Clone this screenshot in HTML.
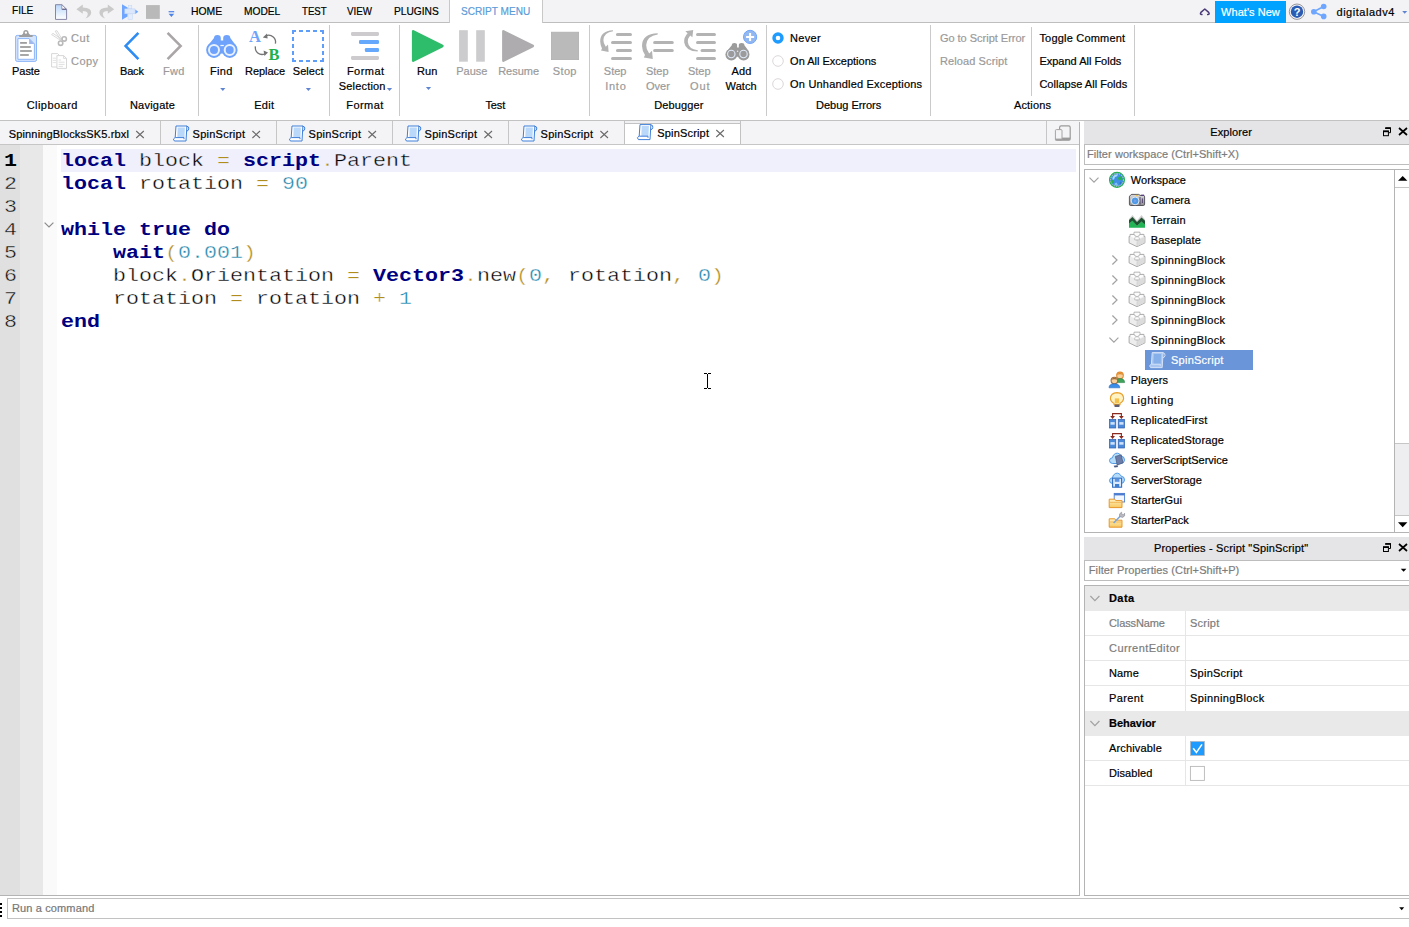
<!DOCTYPE html>
<html lang="en"><head><meta charset="utf-8"><title>SpinScript - Roblox Studio</title>
<style>

html,body{margin:0;padding:0}
body{width:1409px;height:927px;position:relative;overflow:hidden;background:#fff;font-family:"Liberation Sans",sans-serif;font-size:11px;color:#111}
.t{position:absolute;white-space:nowrap;line-height:14px;font-size:11px;-webkit-text-stroke:0.2px}
.b{position:absolute;box-sizing:border-box}
#ov{position:absolute;left:0;top:0;width:1409px;height:927px;pointer-events:none}
#ov text{font-family:"Liberation Serif",serif}
.code{position:absolute;left:61px;white-space:pre;font-family:"Liberation Mono",monospace;font-size:18.5px;line-height:23px;height:23px;transform-origin:0 0;transform:scaleX(1.1709);color:#000;-webkit-text-stroke:0.35px #fff}
.ln{position:absolute;left:4px;white-space:pre;font-family:"Liberation Mono",monospace;font-size:18.5px;line-height:23px;height:23px;transform-origin:0 0;transform:scaleX(1.1709);color:#111;-webkit-text-stroke:0.35px #e4e4e4}
.k{font-weight:bold;color:#00007f;-webkit-text-stroke:0}
.hl{-webkit-text-stroke-color:#f0f0fc}
.n{color:#1f86ad}
.o{color:#b08c1c}

</style></head>
<body>
<div class="b" style="left:0px;top:0px;width:1409px;height:22px;background:#f3f3f5;"></div>
<div class="b" style="left:0px;top:22px;width:1409px;height:1px;background:#bebebe;"></div>
<div class="b" style="left:449px;top:0px;width:94px;height:23px;background:#fff;border-left:1px solid #c8c8c8;border-right:1px solid #c8c8c8;"></div>
<div class="b" style="left:1215px;top:1px;width:71px;height:22px;background:#00a2ff;"></div>
<div class="b" style="left:0px;top:120px;width:1409px;height:1px;background:#c2c2c2;"></div>
<div class="b" style="left:105px;top:25px;width:1px;height:91px;background:#cacaca;"></div>
<div class="b" style="left:198px;top:25px;width:1px;height:91px;background:#cacaca;"></div>
<div class="b" style="left:329px;top:25px;width:1px;height:91px;background:#cacaca;"></div>
<div class="b" style="left:399px;top:25px;width:1px;height:91px;background:#cacaca;"></div>
<div class="b" style="left:589px;top:25px;width:1px;height:91px;background:#cacaca;"></div>
<div class="b" style="left:766px;top:25px;width:1px;height:91px;background:#cacaca;"></div>
<div class="b" style="left:930px;top:25px;width:1px;height:91px;background:#cacaca;"></div>
<div class="b" style="left:1134px;top:25px;width:1px;height:91px;background:#cacaca;"></div>
<div class="b" style="left:1031px;top:27px;width:1px;height:69px;background:#cacaca;"></div>
<div class="b" style="left:0px;top:121px;width:1080px;height:23px;background:#f4f4f6;"></div>
<div class="b" style="left:0px;top:144px;width:1080px;height:1px;background:#c6c6c6;"></div>
<div class="b" style="left:160px;top:121px;width:1px;height:23px;background:#c6c6c6;"></div>
<div class="b" style="left:276px;top:121px;width:1px;height:23px;background:#c6c6c6;"></div>
<div class="b" style="left:392px;top:121px;width:1px;height:23px;background:#c6c6c6;"></div>
<div class="b" style="left:508px;top:121px;width:1px;height:23px;background:#c6c6c6;"></div>
<div class="b" style="left:624px;top:121px;width:117px;height:23px;background:#f0f0f2;border-left:1px solid #c2c2c2;border-right:1px solid #c2c2c2;"></div>
<div class="b" style="left:625px;top:123px;width:115px;height:21px;background:#fff;border-top:1px solid #c2c2c2;"></div>
<div class="b" style="left:1046px;top:121px;width:1px;height:23px;background:#c6c6c6;"></div>
<div class="b" style="left:0px;top:145px;width:20px;height:750px;background:#e0e0e0;"></div>
<div class="b" style="left:20px;top:145px;width:23px;height:750px;background:#e8e8e8;"></div>
<div class="b" style="left:43px;top:145px;width:14px;height:750px;background:#fafafa;"></div>
<div class="b" style="left:61px;top:149px;width:1015px;height:23px;background:#f0f0fc;"></div>
<div class="b" style="left:1079px;top:122px;width:1px;height:774px;background:#b4b4b4;"></div>
<div class="b" style="left:0px;top:895px;width:1080px;height:1px;background:#b4b4b4;"></div>
<div class="b" style="left:1084px;top:121px;width:325px;height:23px;background:#e5e5e7;"></div>
<div class="b" style="left:1084px;top:144px;width:340px;height:21px;background:#fff;border:1px solid #bdbdbd;"></div>
<div class="b" style="left:1084px;top:169px;width:340px;height:364px;background:#fff;border:1px solid #b4b4b4;"></div>
<div class="b" style="left:1394px;top:170px;width:1px;height:362px;background:#b4b4b4;"></div>
<div class="b" style="left:1395px;top:187px;width:14px;height:1px;background:#c6c6c6;"></div>
<div class="b" style="left:1395px;top:443px;width:14px;height:1px;background:#c6c6c6;"></div>
<div class="b" style="left:1395px;top:444px;width:14px;height:71px;background:#eeeef0;"></div>
<div class="b" style="left:1395px;top:515px;width:14px;height:1px;background:#c6c6c6;"></div>
<div class="b" style="left:1145px;top:350px;width:108px;height:20px;background:#6a95d8;"></div>
<div class="b" style="left:1084px;top:537px;width:325px;height:23px;background:#e5e5e7;"></div>
<div class="b" style="left:1084px;top:560px;width:340px;height:21px;background:#fff;border:1px solid #bdbdbd;"></div>
<div class="b" style="left:1084px;top:585px;width:340px;height:311px;background:#fff;border:1px solid #b4b4b4;"></div>
<div class="b" style="left:1085px;top:586px;width:324px;height:25px;background:#e9e9e9;"></div>
<div class="b" style="left:1085px;top:711px;width:324px;height:25px;background:#e9e9e9;"></div>
<div class="b" style="left:1085px;top:635px;width:324px;height:1px;background:#e6e6e6;"></div>
<div class="b" style="left:1085px;top:660px;width:324px;height:1px;background:#e6e6e6;"></div>
<div class="b" style="left:1085px;top:685px;width:324px;height:1px;background:#e6e6e6;"></div>
<div class="b" style="left:1085px;top:760px;width:324px;height:1px;background:#e6e6e6;"></div>
<div class="b" style="left:1085px;top:785px;width:324px;height:1px;background:#e6e6e6;"></div>
<div class="b" style="left:1185px;top:611px;width:1px;height:100px;background:#e6e6e6;"></div>
<div class="b" style="left:1185px;top:736px;width:1px;height:50px;background:#e6e6e6;"></div>
<div class="b" style="left:7px;top:898px;width:1420px;height:21px;background:#fff;border:1px solid #c2c2c2;"></div>
<svg id="ov" width="1409" height="927" viewBox="0 0 1409 927">
<defs>
<linearGradient id="gdoc" x1="0" y1="0" x2="0" y2="1"><stop offset="0" stop-color="#b9d6fa"/><stop offset="1" stop-color="#ffffff"/></linearGradient>
<linearGradient id="gscr" x1="0" y1="0" x2="1" y2="1"><stop offset="0" stop-color="#d6e8fc"/><stop offset="1" stop-color="#9cc3f3"/></linearGradient>
<linearGradient id="gfold" x1="0" y1="0" x2="0" y2="1"><stop offset="0" stop-color="#fff0c0"/><stop offset="1" stop-color="#f8c860"/></linearGradient>
<g id="script">
 <path d="M3 0.6 H13.9 L13 15.6 H1.4 L0.4 13.7 L2.2 12 Z" fill="#fff" stroke="#3f7fd9" stroke-width="1" stroke-linejoin="round"/>
 <path d="M4.7 2.1 H11.9 L11.5 12 H4.3 Z" fill="#b9d8fa"/>
 <path d="M13.6 0.7 Q16.3 1 15.8 3.6 Q15.4 5.6 13.6 5.7" fill="none" stroke="#3f7fd9" stroke-width="1"/>
 <path d="M2.2 12.2 H11 V13.8" fill="none" stroke="#3f7fd9" stroke-width="1"/>
</g>
<g id="scriptsel">
 <path d="M3 0.6 H13.9 L13 15.6 H1.4 L0.4 13.7 L2.2 12 Z" fill="#a9c6f0" stroke="#d3e2f9" stroke-width="1" stroke-linejoin="round"/>
 <path d="M4.7 2.1 H11.9 L11.5 12 H4.3 Z" fill="#86b0ea"/>
 <path d="M13.6 0.7 Q16.3 1 15.8 3.6 Q15.4 5.6 13.6 5.7" fill="none" stroke="#d3e2f9" stroke-width="1"/>
 <path d="M2.2 12.2 H11 V13.8" fill="none" stroke="#d3e2f9" stroke-width="1"/>
</g>
<g id="part">
  <path d="M5.1 0.5 H10.9 V2.7 H14.9 V4.7 H15.9 V11.2 L8 15 L0.1 11.2 V4.7 H1.1 V2.7 H5.1 Z" fill="#ededed" stroke="#a3a3a3" stroke-width="0.9" stroke-linejoin="round"/>
  <path d="M8 8.6 L15.5 5.2 V11 L8 14.5 Z" fill="#dcdcdc"/>
  <path d="M1.6 3.2 H5.4 V1 H10.6 V3.2 H14.4 V4.9 L8 8 L1.6 4.9 Z" fill="#fbfbfb"/>
  <path d="M5.3 2.6 Q5.5 4.9 8 4.9 Q10.5 4.9 10.7 2.6" fill="none" stroke="#a8a8a8" stroke-width="0.8"/>
  <path d="M5.5 6.4 V8 Q8 9.8 10.5 8 V6.4" fill="#f4f4f4" stroke="#b6b6b6" stroke-width="0.7"/>
  <ellipse cx="8" cy="6.5" rx="2.5" ry="1.3" fill="#fff" stroke="#bcbcbc" stroke-width="0.6"/>
  <path d="M8 9.8 V14.6" stroke="#cfcfcf" stroke-width="0.8"/>
</g>
<g id="chevd"><path d="M0 0 L4.5 4.6 L9 0" fill="none" stroke="#a2a2a2" stroke-width="1.2"/></g>
<g id="chevr"><path d="M0 0 L4.6 4.5 L0 9" fill="none" stroke="#a2a2a2" stroke-width="1.2"/></g>
<g id="float">
  <path d="M2.6 0.5 H7.5 V5.3 H6" fill="none" stroke="#000" stroke-width="1"/><rect x="2.1" y="0" width="5.9" height="1.6" fill="#000"/>
  <rect x="0.5" y="3.7" width="4.9" height="4.6" fill="none" stroke="#000" stroke-width="1"/><rect x="0" y="3.2" width="5.9" height="1.6" fill="#000"/>
</g>
<g id="closex"><path d="M0 0 L8 7 M8 0 L0 7" stroke="#000" stroke-width="1.7" fill="none"/></g>
<g id="tabx"><path d="M0 0 L7.6 7 M7.6 0 L0 7" stroke="#6a6a6a" stroke-width="1.1" fill="none"/></g>
<g id="dd"><path d="M0 0 H5.2 L2.6 3 Z" fill="#5f84d2"/></g>
<g id="repl">
  <rect x="0.4" y="6.8" width="6.4" height="8.6" fill="#4b8ad9" stroke="#2f5fae" stroke-width="0.7"/>
  <rect x="9.2" y="6.8" width="6.4" height="8.6" fill="#4b8ad9" stroke="#2f5fae" stroke-width="0.7"/>
  <rect x="1.5" y="9.5" width="4.2" height="2.6" fill="#cfe2fa"/><rect x="10.3" y="9.5" width="4.2" height="2.6" fill="#cfe2fa"/>
  <path d="M3.6 4.5 V1 H12.4 V4.5" fill="none" stroke="#8a2a1e" stroke-width="1.1"/>
  <path d="M1.2 3.4 H6 L3.6 6.4 Z M10 3.4 H14.8 L12.4 6.4 Z" fill="#8a2a1e"/>
</g>
<g id="cloud">
  <path d="M3.6 11.5 Q0.3 11.3 0.5 8.3 Q0.8 5.8 3.4 5.8 Q3.8 2.6 6.6 1.4 Q10.4 0.4 12.2 4.2 Q15.6 4.4 15.5 8 Q15.3 11.2 12.2 11.5 Z" fill="#b6dcfb" stroke="#3f8ee0" stroke-width="0.9"/>
</g>
<g id="folder">
  <path d="M0.6 6.2 H6.2 L7.2 7.6 H13.4 V14.6 H0.6 Z" fill="url(#gfold)" stroke="#e6962a" stroke-width="1"/>
  <path d="M0.6 9.4 H13.4" stroke="#f0b04a" stroke-width="0.8"/>
</g>
</defs>

<!-- ===== quick access toolbar ===== -->
<path d="M55.5 4.7 H61.8 L66.6 9.4 V19.4 H55.5 Z" fill="url(#gdoc)" stroke="#8685a6" stroke-width="1"/>
<path d="M61.8 4.7 V9.4 H66.6 Z" fill="#fff" stroke="#8685a6" stroke-width="0.8" stroke-linejoin="round"/>
<path d="M62.2 8.6 H66.4 V9.9 H62.2 Z" fill="#66688c"/>
<path d="M76.4 9.2 L82.8 4.6 V7.4 Q91.8 7.6 91.2 13 Q90.6 16.6 85.4 18.6 Q88.4 15.4 87.6 13 Q86.8 11 82.8 11 V13.8 Z" fill="#cacaca"/>
<path d="M114.2 9.2 L107.8 4.6 V7.4 Q98.8 7.6 99.4 13 Q100 16.6 105.2 18.6 Q102.2 15.4 103 13 Q103.8 11 107.8 11 V13.8 Z" fill="#cacaca"/>
<path d="M122 4.2 L127.6 7.6 V16.6 L122 19.8 Z" fill="#6ea6ff"/>
<rect x="128.4" y="5.5" width="3.4" height="3.3" fill="#e4edfb" stroke="#c3d6f4" stroke-width="0.5"/>
<rect x="124.8" y="8.9" width="10.2" height="4.9" fill="#dbe8fb" stroke="#bcd2f5" stroke-width="0.5"/>
<rect x="128" y="13.9" width="4.5" height="5.6" fill="#e4edfb" stroke="#c3d6f4" stroke-width="0.5"/>
<path d="M135.3 9.6 L138.3 11.8 L135.3 14 Z" fill="#6ea6ff"/>
<rect x="146" y="5.1" width="13.8" height="13.8" fill="#b9b9b9"/>
<rect x="168.6" y="11.1" width="5.6" height="1.2" fill="#4d82e8"/>
<path d="M168.6 13.8 H174.2 L171.4 17.1 Z" fill="#4d82e8"/>

<!-- top right -->
<path d="M1201.9 14.6 Q1199.6 14.2 1200.9 12.4 L1204.8 9 L1208.7 12.4 Q1210 14.2 1207.7 14.6" fill="none" stroke="#4b3a78" stroke-width="1.5" stroke-linejoin="round" stroke-linecap="round"/>
<circle cx="1297" cy="11.7" r="7.7" fill="#f4f4f6" stroke="#8a8a92" stroke-width="0.9"/>
<circle cx="1297" cy="11.7" r="6.2" fill="#2a5cb4"/>
<text x="1297" y="15.6" text-anchor="middle" style="font-family:'Liberation Sans',sans-serif;font-weight:bold;font-size:11px" fill="#fff">?</text>
<path d="M1323.7 6.5 L1313.6 11.7 L1323.7 16.4" fill="none" stroke="#6ea6ff" stroke-width="1.6"/>
<circle cx="1323.7" cy="6.5" r="2.8" fill="#6ea6ff"/><circle cx="1313.8" cy="11.7" r="2.8" fill="#6ea6ff"/><circle cx="1323.7" cy="16.4" r="2.8" fill="#6ea6ff"/>
<path d="M1402.2 10.9 H1407.2 L1404.7 13.7 Z" fill="#5f84d2"/>

<!-- ===== clipboard ===== -->
<rect x="15.6" y="35.4" width="20.9" height="26" rx="1.6" fill="#d5e5fd" stroke="#8db6f8" stroke-width="1"/>
<path d="M17.9 38.6 H29.1 L34.4 43.9 V59.3 H17.9 Z" fill="#fff" stroke="#8db6f8" stroke-width="1"/>
<path d="M29.1 38.6 V43.9 H34.4 Z" fill="#9db8ec"/>
<rect x="20.1" y="42" width="6.8" height="1.8" fill="#9e9e9e"/><rect x="20.1" y="46.1" width="10.7" height="1.8" fill="#9e9e9e"/>
<rect x="20.1" y="50.1" width="11.7" height="1.8" fill="#9e9e9e"/><rect x="20.1" y="54.1" width="8.7" height="1.8" fill="#9e9e9e"/>
<path d="M19.2 34.9 H32.6 V36.9 H19.2 Z M21.8 35 L24.4 32 H27.6 L30.2 35 Z" fill="#9e9e9e"/>
<circle cx="25.9" cy="32.6" r="1.9" fill="#fff" stroke="#9e9e9e" stroke-width="1.4"/>
<!-- cut -->
<path d="M51.6 34.6 L53 33.4 L61.4 39 L60.4 40.2 Z M55.2 31.2 L57 30.7 L61.6 38.6 L60.4 39.4 Z" fill="#fff" stroke="#cfcfcf" stroke-width="0.8"/>
<circle cx="64.2" cy="38.9" r="2.2" fill="none" stroke="#b9b9b9" stroke-width="1.6"/>
<circle cx="60.6" cy="43.2" r="2.2" fill="none" stroke="#b9b9b9" stroke-width="1.6"/>
<!-- copy -->
<path d="M51.6 53.6 H57.6 L59.8 55.8 V67 H51.6 Z" fill="#fff" stroke="#d2d2d2" stroke-width="0.9"/>
<path d="M52.8 58.2 H56 M52.8 60.4 H56 M52.8 62.6 H56" stroke="#dcdcdc" stroke-width="0.8"/>
<path d="M56.9 55.6 H63.6 L66.5 58.4 V68.4 H56.9 Z" fill="#fff" stroke="#d2d2d2" stroke-width="0.9"/>
<path d="M63.6 55.6 V58.4 H66.5" fill="none" stroke="#d2d2d2" stroke-width="0.8"/>
<path d="M58.6 60 H61 M58.6 62.2 H64.6 M58.6 64.4 H64.6 M58.6 66.4 H63" stroke="#d8d8d8" stroke-width="0.8"/>

<!-- navigate -->
<path d="M138.4 32.8 L125.6 45.9 L138.4 59.2" fill="none" stroke="#2e8cf2" stroke-width="2.6"/>
<path d="M167.6 32.8 L180.6 45.9 L167.6 59.2" fill="none" stroke="#aaa5a7" stroke-width="2.6"/>

<!-- find binoculars -->
<g fill="#6fa3fb">
 <path d="M214 38 Q214 34.9 217.4 34.9 Q220.8 34.9 220.8 38 V40.6 H223.2 V38 Q223.2 34.9 226.8 34.9 Q230.3 34.9 230.3 38 L236.6 46.4 L229.6 53.6 H214 L207.2 46.4 Z"/>
 <circle cx="214" cy="50" r="7.9"/><circle cx="229.7" cy="50" r="7.9"/>
</g>
<circle cx="214" cy="50" r="5" fill="none" stroke="#e9f0fe" stroke-width="2"/><circle cx="229.7" cy="50" r="5" fill="none" stroke="#e9f0fe" stroke-width="2"/>
<rect x="220.4" y="44.9" width="3.4" height="1.2" fill="#f4f8ff"/>
<use href="#dd" x="220.2" y="88"/>
<!-- replace -->
<text x="249" y="42" font-weight="bold" font-size="16.5" fill="#6fa3fb">A</text>
<text x="268.6" y="59.9" font-weight="bold" font-size="16.5" fill="#22b04c">B</text>
<path d="M275.4 43.6 C276.6 38 271.6 34 266 35.6" fill="none" stroke="#747474" stroke-width="1.3"/>
<path d="M262.8 37.4 L267 33.6 L267.6 38.6 Z" fill="#747474"/>
<path d="M255.4 46.4 C254.6 52 259.4 55.8 264.8 54" fill="none" stroke="#747474" stroke-width="1.3"/>
<path d="M268 52.6 L263.6 50.4 L264.4 56 Z" fill="#747474"/>
<!-- select dashed -->
<g fill="#5e9efa">
 <path d="M292 30 h4 v2 h-2 v2 h-2z M324 30 v4 h-2 v-2 h-2 v-2z M292 62 v-4 h2 v2 h2 v2z M324 62 h-4 v-2 h2 v-2 h2z"/>
 <path d="M299 30 h4 v2 h-4z M306 30 h4 v2 h-4z M313 30 h4 v2 h-4z M299 60 h4 v2 h-4z M306 60 h4 v2 h-4z M313 60 h4 v2 h-4z"/>
 <path d="M292 37 h2 v4 h-2z M292 44 h2 v4 h-2z M292 51 h2 v4 h-2z M322 37 h2 v4 h-2z M322 44 h2 v4 h-2z M322 51 h2 v4 h-2z"/>
</g>
<use href="#dd" x="305.8" y="88"/>
<!-- format -->
<rect x="351" y="32" width="28" height="3.9" rx="1.4" fill="#cdcbcd"/>
<rect x="359" y="40.1" width="20" height="3.8" rx="1.2" fill="#66a8fc"/>
<rect x="364.9" y="48.1" width="14.1" height="3.9" rx="1.2" fill="#66a8fc"/>
<rect x="351" y="56" width="28" height="4" rx="1.4" fill="#cdcbcd"/>
<use href="#dd" x="386.9" y="88"/>
<!-- test -->
<path d="M413.2 31.4 L442.4 46 L413.2 60.6 Z" fill="#2ebd6b" stroke="#2ebd6b" stroke-width="2.6" stroke-linejoin="round"/>
<use href="#dd" x="425.9" y="87"/>
<rect x="459.1" y="30.2" width="8.7" height="31.5" fill="#cccbcd"/><rect x="476.2" y="30.2" width="8.6" height="31.5" fill="#cccbcd"/>
<path d="M503.4 31.4 L532.8 46 L503.4 60.6 Z" fill="#aeacae" stroke="#aeacae" stroke-width="2.6" stroke-linejoin="round"/>
<rect x="551.4" y="32.2" width="27.2" height="27.4" fill="#bababa" stroke="#b0b0b0" stroke-width="0.8"/>
<!-- debugger -->
<g stroke="#b3b3b3" stroke-width="3.2" stroke-linecap="round" fill="none">
 <path d="M617.5 34.5 H630.4 M612.6 42.5 H630.4 M617.5 50.5 H630.4 M612.6 58.5 H630.4"/>
 <path d="M654.7 42.5 H672.2 M654.7 50.5 H672.2"/>
 <path d="M697.6 34.5 H714.4 M697.6 42.5 H714.4 M702.1 50.5 H714.4 M697.6 58.5 H714.4"/>
</g>
<g fill="#b3b3b3">
 <path d="M613 30.2 Q600 31 600.2 41.5 Q600.3 45 602 48.5 L601 50.5 L608.6 52 L608 44.5 L605.8 46.8 Q603.2 43 603.4 40 Q604 32.5 613 31.3 Z"/>
 <path d="M657.7 33.3 Q642 34 642 46 Q642.2 51 645 55 L643.8 57.4 L652.8 59 L652 50.8 L649.2 53.5 Q646 49.5 646.2 45 Q647 36 657.7 34.6 Z"/>
 <path d="M693.2 30 L685.3 31.2 L687.6 33.2 Q683.6 37.5 684.2 42.5 Q685.5 51.3 697.8 51.6 L697.8 50.3 Q688.5 49 687.8 42 Q687.5 38.5 690.2 35.5 L692.4 37.2 Z"/>
</g>
<!-- add watch -->
<g fill="#9b9b9b">
 <path d="M731.8 45.2 Q731.8 42.9 734.4 42.9 Q737.1 42.9 737.1 45.2 V47.4 H738.8 V45.2 Q738.8 42.9 741.6 42.9 Q744.4 42.9 744.4 45.2 L749 51.6 L743.6 56.8 H731.2 L726.6 51.6 Z"/>
 <circle cx="731.3" cy="54.6" r="5.9"/><circle cx="743.6" cy="54.6" r="5.9"/>
</g>
<circle cx="731.3" cy="54" r="3.7" fill="none" stroke="#e2ebfb" stroke-width="1.1"/><circle cx="743.5" cy="54" r="3.7" fill="none" stroke="#e2ebfb" stroke-width="1.1"/>
<circle cx="737.6" cy="51.3" r="0.8" fill="#e8e8e8"/>
<circle cx="750.1" cy="36.9" r="6.6" fill="#93b8f0" stroke="#71a6fb" stroke-width="1"/>
<path d="M746.1 36.9 H754.1 M750.1 32.9 V40.9" stroke="#fff" stroke-width="2"/>
<!-- radios -->
<circle cx="778" cy="38" r="4" fill="#fff" stroke="#1e9bff" stroke-width="3.4"/>
<circle cx="778" cy="61" r="5.3" fill="#fff" stroke="#d8d2d2" stroke-width="0.9"/>
<circle cx="778" cy="84" r="5.3" fill="#fff" stroke="#d8d2d2" stroke-width="0.9"/>

<!-- ===== doc tabs ===== -->
<use href="#tabx" x="136.2" y="131"/>
<use href="#script" x="173" y="125.4"/><use href="#tabx" x="252.4" y="131"/>
<use href="#script" x="289" y="125.4"/><use href="#tabx" x="368.4" y="131"/>
<use href="#script" x="405" y="125.4"/><use href="#tabx" x="484.4" y="131"/>
<use href="#script" x="521" y="125.4"/><use href="#tabx" x="600.4" y="131"/>
<use href="#script" x="637" y="124"/><use href="#tabx" x="716.3" y="130"/>
<!-- device icon -->
<rect x="1059.6" y="125.8" width="10.6" height="14.4" rx="1.6" fill="#f4f4f6" stroke="#9a9a9a" stroke-width="1.2"/>
<rect x="1059.6" y="137.6" width="10.6" height="2.6" fill="#9a9a9a"/>
<rect x="1055.4" y="129.6" width="6.6" height="10.8" rx="1" fill="#f4f4f6" stroke="#a8a2a2" stroke-width="1"/>
<rect x="1055.4" y="138.6" width="6.6" height="1.8" fill="#a0a0a0"/>

<!-- fold marker + ibeam -->
<path d="M44.6 222.6 L49 227 L53.4 222.6" fill="none" stroke="#8c8c8c" stroke-width="1.2"/>
<path d="M707.5 374 V388 M704 373.5 H707 M708 373.5 H711 M704 388.5 H707 M708 388.5 H711" stroke="#000" stroke-width="1" fill="none"/>

<!-- ===== explorer ===== -->
<use href="#float" x="1383" y="127.4"/><use href="#closex" x="1399" y="128"/>
<path d="M1398 180.8 H1407.4 L1402.7 176 Z" fill="#000"/>
<path d="M1398 522.2 H1407.4 L1402.7 527.2 Z" fill="#000"/>
<use href="#chevd" x="1089.5" y="177.6"/>
<use href="#chevr" x="1112.4" y="255.5"/><use href="#chevr" x="1112.4" y="275.5"/><use href="#chevr" x="1112.4" y="295.5"/><use href="#chevr" x="1112.4" y="315.5"/>
<use href="#chevd" x="1109.4" y="337.6"/>
<!-- workspace globe -->
<circle cx="1117" cy="179.85" r="7.5" fill="#3f8fe6" stroke="#27b052" stroke-width="1.1"/>
<circle cx="1117" cy="179.85" r="6.4" fill="none" stroke="#efe78e" stroke-width="0.8" stroke-dasharray="1.3 1.1"/>
<path d="M1112.6 177.2 Q1114.2 174 1118 174.2 L1117.2 176.2 L1115 177 L1114 179.4 L1112.4 179.4 Z" fill="#a5dbf6"/>
<path d="M1118.4 177.2 L1120.4 176.2 Q1122.6 177.2 1122.8 180 L1121.4 181 L1120.6 179.8 L1118.8 180.2 L1118 178.6 Z" fill="#27b052"/>
<path d="M1111.4 179.6 L1113.2 180.4 L1113.8 183 L1112.6 183.6 Q1111.2 182 1111.4 179.6 Z" fill="#27b052"/>
<path d="M1120.2 181.8 L1121.6 182 L1120.4 184.4 L1119.4 183.6 Z" fill="#2a74d0"/>
<path d="M1114.6 183.6 L1116.6 182.6 L1118.2 185.6 Q1116 186.2 1114.6 185 Z" fill="#7fc0f4"/>
<!-- camera -->
<defs><linearGradient id="gcam" x1="0" y1="0" x2="0" y2="1"><stop offset="0" stop-color="#dcdcdc"/><stop offset="1" stop-color="#8e8e8e"/></linearGradient></defs>
<path d="M1130.6 195.4 Q1130.8 194.4 1131.8 194.4 H1138.6 Q1139.6 194.4 1139.8 195.4 H1143.6 Q1144.6 195.6 1144.6 196.8 V204.2 Q1144.6 205.5 1143.4 205.5 H1130.6 Q1129.4 205.5 1129.4 204.2 V196.8 Q1129.4 195.6 1130.6 195.4 Z" fill="url(#gcam)" stroke="#4a4a50" stroke-width="0.9"/>
<rect x="1141.1" y="194.7" width="3" height="1.3" fill="#5a3a8a"/>
<rect x="1135.9" y="194.9" width="2.3" height="1.1" fill="#f2c64a"/>
<path d="M1140 197 V204.6 M1142.4 198.4 V203" stroke="#4a3a6a" stroke-width="0.9"/>
<circle cx="1135.1" cy="200.9" r="3.9" fill="#4a9ae8" stroke="#e4e6ea" stroke-width="1"/>
<path d="M1134.2 199.2 L1136.8 200.9 L1134.2 202.6 Z" fill="#7f9fe8"/>
<!-- terrain -->
<path d="M1129 219 L1132.5 215 L1137 220.6 L1141.5 215 L1145 219.6 V224 H1129 Z" fill="#cfcfcf"/>
<path d="M1129 227.8 V223.4 L1132.5 220.6 L1137 225.6 L1141.5 221.2 L1145 224.2 V227.8 Z" fill="#22b455"/>
<path d="M1129 220 L1132.5 217 L1137 222 L1141.5 217.6 L1145 220.8 V224.4 L1141.5 221.4 L1137 225.8 L1132.5 220.8 L1129 223.6 Z" fill="#1f5230"/>
<!-- parts -->
<use href="#part" x="1129" y="231.7"/><use href="#part" x="1129" y="251.7"/><use href="#part" x="1129" y="271.7"/><use href="#part" x="1129" y="291.7"/><use href="#part" x="1129" y="311.7"/><use href="#part" x="1129" y="331.7"/>
<!-- selected script -->
<use href="#scriptsel" x="1149.2" y="352"/>
<!-- players -->
<circle cx="1120" cy="375.4" r="3.3" fill="#f6cf9c" stroke="#e08a2c" stroke-width="1.1"/>
<path d="M1116.4 375 Q1120 370.4 1123.6 375 Q1120 373.4 1116.4 375 Z" fill="#e08a2c"/>
<path d="M1115.6 382.6 Q1115.6 378.6 1120 378.6 Q1124.6 378.6 1124.6 382.6 Z" fill="#3da35a" stroke="#2c8046" stroke-width="0.6"/>
<circle cx="1114.4" cy="380.6" r="3.3" fill="#f6cf9c" stroke="#9c6c3c" stroke-width="1.1"/>
<path d="M1110.8 380 Q1114.4 375.4 1118 380 Q1114.4 378.4 1110.8 380 Z" fill="#9c6c3c"/>
<path d="M1109 387.8 Q1109 383.8 1114.4 383.8 Q1119.8 383.8 1119.8 387.8 Z" fill="#3b8fe8" stroke="#2a6cc0" stroke-width="0.6"/>
<!-- lighting -->
<path d="M1117 392.6 Q1123.6 392.8 1123.6 398.6 Q1123.4 401.4 1120 403.4 V404.6 H1114 V403.4 Q1110.4 401.4 1110.4 398.6 Q1110.6 392.8 1117 392.6 Z" fill="#fff3c4" stroke="#e9a12e" stroke-width="1.1"/>
<rect x="1114.8" y="398.4" width="4.4" height="5" fill="#f4c24c"/>
<rect x="1114.4" y="404.6" width="5.2" height="2.4" rx="0.8" fill="#5e5e70"/>
<!-- replicated -->
<use href="#repl" x="1109" y="412.6"/><use href="#repl" x="1109" y="432.6"/>
<!-- serverscriptservice -->
<use href="#cloud" x="1109" y="452"/>
<path d="M1115.4 456.4 L1121.2 454.8 L1123 462.8 L1117.2 465.2 Z" fill="#6b7da8" stroke="#44567e" stroke-width="0.7"/>
<path d="M1113.6 465.8 L1117.2 465.2 L1118.2 467 L1114.6 467.4 Z" fill="#4a5a80"/>
<!-- serverstorage -->
<use href="#cloud" x="1109" y="472"/>
<rect x="1112.6" y="478.2" width="9" height="9" fill="#dbeafc" stroke="#2f6cc0" stroke-width="1.1"/>
<rect x="1114.8" y="478.8" width="4.6" height="3" fill="#5a94e0"/><rect x="1115" y="484" width="4.2" height="3.2" fill="#3f7fd2"/>
<!-- startergui -->
<rect x="1114.2" y="493.4" width="10.4" height="8.6" fill="#f2f6fe" stroke="#4b7bd0" stroke-width="0.9"/><rect x="1114.2" y="493.4" width="10.4" height="2" fill="#4b7bd0"/>
<use href="#folder" x="1108.6" y="493"/>
<!-- starterpack -->
<use href="#folder" x="1108.6" y="512.6"/>
<path d="M1113.6 523 L1120.6 515.8" stroke="#7aa2d8" stroke-width="1.4"/>
<path d="M1119.6 516.6 Q1118.6 513.4 1121.6 512.2 L1121.8 514.4 L1123.4 514.8 L1124.6 513.2 Q1125.6 516.4 1122.6 517.4 Z" fill="#b9b9c2" stroke="#8a8a96" stroke-width="0.6"/>

<!-- ===== properties ===== -->
<use href="#float" x="1383" y="543.2"/><use href="#closex" x="1399" y="544"/>
<path d="M1400.8 568.8 H1406.4 L1403.6 571.8 Z" fill="#000"/>
<use href="#chevd" x="1090.4" y="596"/><use href="#chevd" x="1090.4" y="721"/>
<rect x="1190.4" y="741.4" width="14" height="14" fill="#1e9bff" stroke="#b0b8c4" stroke-width="0.8"/>
<path d="M1193.2 748.2 L1196.4 752.4 L1202 744.4" fill="none" stroke="#fff" stroke-width="1.5"/>
<rect x="1190.4" y="766.4" width="14" height="14" fill="#fff" stroke="#b8b8b8" stroke-width="0.9"/>
<!-- command bar -->
<rect x="0" y="903" width="2" height="2" fill="#000"/><rect x="0" y="907" width="2" height="2" fill="#000"/><rect x="0" y="911" width="2" height="2" fill="#000"/><rect x="0" y="915" width="2" height="2" fill="#000"/>
<path d="M1399.2 907.2 H1404.2 L1401.7 910.2 Z" fill="#000"/>
</svg>

<div class="ln" style="top:150px;font-weight:bold;color:#000;-webkit-text-stroke:0;">1</div>
<div class="code hl" style="top:150px"><span class="k">local</span> block <span class="o">=</span> <span class="k">script</span><span class="o">.</span>Parent</div>
<div class="ln" style="top:173px;">2</div>
<div class="code" style="top:173px"><span class="k">local</span> rotation <span class="o">=</span> <span class="n">90</span></div>
<div class="ln" style="top:196px;">3</div>
<div class="ln" style="top:219px;">4</div>
<div class="code" style="top:219px"><span class="k">while</span> <span class="k">true</span> <span class="k">do</span></div>
<div class="ln" style="top:242px;">5</div>
<div class="code" style="top:242px">    <span class="k">wait</span><span class="o">(</span><span class="n">0.001</span><span class="o">)</span></div>
<div class="ln" style="top:265px;">6</div>
<div class="code" style="top:265px">    block<span class="o">.</span>Orientation <span class="o">=</span> <span class="k">Vector3</span><span class="o">.</span>new<span class="o">(</span><span class="n">0</span><span class="o">,</span> rotation<span class="o">,</span> <span class="n">0</span><span class="o">)</span></div>
<div class="ln" style="top:288px;">7</div>
<div class="code" style="top:288px">    rotation <span class="o">=</span> rotation <span class="o">+</span> <span class="n">1</span></div>
<div class="ln" style="top:311px;">8</div>
<div class="code" style="top:311px"><span class="k">end</span></div>
<div id="texts">
<span id="t0" class="t" style="left:12.00px;top:3.19px;color:#000;transform-origin:0 0;transform:scaleX(0.9167);">FILE</span>
<span id="t1" class="t" style="left:190.90px;top:4.19px;color:#000;transform-origin:0 0;transform:scaleX(0.9455);">HOME</span>
<span id="t2" class="t" style="left:243.80px;top:4.19px;color:#000;transform-origin:0 0;transform:scaleX(0.9278);">MODEL</span>
<span id="t3" class="t" style="left:301.80px;top:4.19px;color:#000;transform-origin:0 0;transform:scaleX(0.8782);">TEST</span>
<span id="t4" class="t" style="left:347.30px;top:4.19px;color:#000;transform-origin:0 0;transform:scaleX(0.8889);">VIEW</span>
<span id="t5" class="t" style="left:394.00px;top:4.19px;color:#000;transform-origin:0 0;transform:scaleX(0.9255);">PLUGINS</span>
<span id="t6" class="t" style="left:460.90px;top:4.19px;color:#5b9bd8;transform-origin:0 0;transform:scaleX(0.9154);">SCRIPT MENU</span>
<span id="t7" class="t" style="left:1221.10px;top:5.19px;color:#fff;letter-spacing:0.040px;">What's New</span>
<span id="t8" class="t" style="left:1336.50px;top:5.19px;color:#000;letter-spacing:0.521px;">digitaladv4</span>
<span id="t9" class="t" style="left:12.10px;top:64.19px;color:#000;letter-spacing:-0.060px;">Paste</span>
<span id="t10" class="t" style="left:120.00px;top:64.19px;color:#000;letter-spacing:-0.190px;">Back</span>
<span id="t11" class="t" style="left:163.10px;top:64.19px;color:#9a9a9a;letter-spacing:0.259px;">Fwd</span>
<span id="t12" class="t" style="left:209.90px;top:64.19px;color:#000;letter-spacing:0.398px;">Find</span>
<span id="t13" class="t" style="left:245.00px;top:64.19px;color:#000;letter-spacing:-0.060px;">Replace</span>
<span id="t14" class="t" style="left:292.80px;top:64.19px;color:#000;letter-spacing:0.024px;">Select</span>
<span id="t15" class="t" style="left:346.90px;top:64.19px;color:#000;letter-spacing:0.471px;">Format</span>
<span id="t16" class="t" style="left:338.70px;top:79.19px;color:#000;letter-spacing:0.192px;">Selection</span>
<span id="t17" class="t" style="left:417.00px;top:64.19px;color:#000;letter-spacing:0.106px;">Run</span>
<span id="t18" class="t" style="left:456.30px;top:64.19px;color:#9a9a9a;letter-spacing:-0.051px;">Pause</span>
<span id="t19" class="t" style="left:498.20px;top:64.19px;color:#9a9a9a;letter-spacing:-0.014px;">Resume</span>
<span id="t20" class="t" style="left:552.80px;top:64.19px;color:#9a9a9a;letter-spacing:0.353px;">Stop</span>
<span id="t21" class="t" style="left:603.80px;top:64.19px;color:#9a9a9a;letter-spacing:0.020px;">Step</span>
<span id="t22" class="t" style="left:605.20px;top:79.19px;color:#9a9a9a;letter-spacing:0.747px;">Into</span>
<span id="t23" class="t" style="left:645.90px;top:64.19px;color:#9a9a9a;letter-spacing:0.020px;">Step</span>
<span id="t24" class="t" style="left:645.90px;top:79.19px;color:#9a9a9a;letter-spacing:0.085px;">Over</span>
<span id="t25" class="t" style="left:687.90px;top:64.19px;color:#9a9a9a;letter-spacing:0.020px;">Step</span>
<span id="t26" class="t" style="left:689.90px;top:79.19px;color:#9a9a9a;letter-spacing:0.933px;">Out</span>
<span id="t27" class="t" style="left:731.50px;top:64.19px;color:#000;letter-spacing:0.161px;">Add</span>
<span id="t28" class="t" style="left:725.60px;top:79.19px;color:#000;letter-spacing:0.059px;">Watch</span>
<span id="t29" class="t" style="left:71.00px;top:31.19px;color:#9a9a9a;letter-spacing:0.637px;">Cut</span>
<span id="t30" class="t" style="left:71.00px;top:54.19px;color:#9a9a9a;letter-spacing:0.437px;">Copy</span>
<span id="t31" class="t" style="left:790.10px;top:31.19px;color:#000;letter-spacing:0.289px;">Never</span>
<span id="t32" class="t" style="left:790.10px;top:54.19px;color:#000;letter-spacing:-0.001px;">On All Exceptions</span>
<span id="t33" class="t" style="left:790.10px;top:77.19px;color:#000;letter-spacing:0.190px;">On Unhandled Exceptions</span>
<span id="t34" class="t" style="left:939.90px;top:31.19px;color:#9a9a9a;letter-spacing:-0.016px;">Go to Script Error</span>
<span id="t35" class="t" style="left:939.90px;top:54.19px;color:#9a9a9a;letter-spacing:0.113px;">Reload Script</span>
<span id="t36" class="t" style="left:1039.40px;top:31.19px;color:#000;letter-spacing:0.203px;">Toggle Comment</span>
<span id="t37" class="t" style="left:1039.40px;top:54.19px;color:#000;letter-spacing:-0.002px;">Expand All Folds</span>
<span id="t38" class="t" style="left:1039.40px;top:77.19px;color:#000;letter-spacing:0.021px;">Collapse All Folds</span>
<span id="t39" class="t" style="left:26.70px;top:98.19px;color:#000;letter-spacing:0.451px;">Clipboard</span>
<span id="t40" class="t" style="left:129.90px;top:98.19px;color:#000;letter-spacing:0.225px;">Navigate</span>
<span id="t41" class="t" style="left:254.20px;top:98.19px;color:#000;letter-spacing:0.310px;">Edit</span>
<span id="t42" class="t" style="left:346.20px;top:98.19px;color:#000;letter-spacing:0.471px;">Format</span>
<span id="t43" class="t" style="left:485.40px;top:98.19px;color:#000;letter-spacing:-0.096px;">Test</span>
<span id="t44" class="t" style="left:654.20px;top:98.19px;color:#000;letter-spacing:0.125px;">Debugger</span>
<span id="t45" class="t" style="left:816.10px;top:98.19px;color:#000;letter-spacing:-0.029px;">Debug Errors</span>
<span id="t46" class="t" style="left:1013.90px;top:98.19px;color:#000;letter-spacing:0.170px;">Actions</span>
<span id="t47" class="t" style="left:8.70px;top:127.19px;color:#000;letter-spacing:0.162px;">SpinningBlocksSK5.rbxl</span>
<span id="t48" class="t" style="left:192.60px;top:127.19px;color:#000;letter-spacing:0.251px;">SpinScript</span>
<span id="t49" class="t" style="left:308.60px;top:127.19px;color:#000;letter-spacing:0.251px;">SpinScript</span>
<span id="t50" class="t" style="left:424.60px;top:127.19px;color:#000;letter-spacing:0.251px;">SpinScript</span>
<span id="t51" class="t" style="left:540.60px;top:127.19px;color:#000;letter-spacing:0.251px;">SpinScript</span>
<span id="t52" class="t" style="left:657.20px;top:126.19px;color:#000;letter-spacing:0.184px;">SpinScript</span>
<span id="t53" class="t" style="left:1210.20px;top:125.19px;color:#000;letter-spacing:0.104px;">Explorer</span>
<span id="t54" class="t" style="left:1086.90px;top:147.19px;color:#7c7c7c;letter-spacing:0.074px;">Filter workspace (Ctrl+Shift+X)</span>
<span id="t55" class="t" style="left:1130.80px;top:173.19px;color:#000;letter-spacing:0.046px;">Workspace</span>
<span id="t56" class="t" style="left:1150.80px;top:193.19px;color:#000;letter-spacing:0.035px;">Camera</span>
<span id="t57" class="t" style="left:1150.80px;top:213.19px;color:#000;letter-spacing:0.179px;">Terrain</span>
<span id="t58" class="t" style="left:1150.80px;top:233.19px;color:#000;letter-spacing:0.145px;">Baseplate</span>
<span id="t59" class="t" style="left:1150.80px;top:253.19px;color:#000;letter-spacing:0.382px;">SpinningBlock</span>
<span id="t60" class="t" style="left:1150.80px;top:273.19px;color:#000;letter-spacing:0.382px;">SpinningBlock</span>
<span id="t61" class="t" style="left:1150.80px;top:293.19px;color:#000;letter-spacing:0.382px;">SpinningBlock</span>
<span id="t62" class="t" style="left:1150.80px;top:313.19px;color:#000;letter-spacing:0.382px;">SpinningBlock</span>
<span id="t63" class="t" style="left:1150.80px;top:333.19px;color:#000;letter-spacing:0.382px;">SpinningBlock</span>
<span id="t64" class="t" style="left:1171.00px;top:353.19px;color:#fff;letter-spacing:0.251px;">SpinScript</span>
<span id="t65" class="t" style="left:1130.80px;top:373.19px;color:#000;letter-spacing:0.102px;">Players</span>
<span id="t66" class="t" style="left:1130.80px;top:393.19px;color:#000;letter-spacing:0.565px;">Lighting</span>
<span id="t67" class="t" style="left:1130.80px;top:413.19px;color:#000;letter-spacing:0.224px;">ReplicatedFirst</span>
<span id="t68" class="t" style="left:1130.80px;top:433.19px;color:#000;letter-spacing:0.162px;">ReplicatedStorage</span>
<span id="t69" class="t" style="left:1130.80px;top:453.19px;color:#000;letter-spacing:-0.006px;">ServerScriptService</span>
<span id="t70" class="t" style="left:1130.80px;top:473.19px;color:#000;letter-spacing:0.005px;">ServerStorage</span>
<span id="t71" class="t" style="left:1130.80px;top:493.19px;color:#000;letter-spacing:0.107px;">StarterGui</span>
<span id="t72" class="t" style="left:1130.80px;top:513.19px;color:#000;letter-spacing:0.053px;">StarterPack</span>
<span id="t73" class="t" style="left:1154.00px;top:541.19px;color:#000;letter-spacing:0.164px;">Properties - Script "SpinScript"</span>
<span id="t74" class="t" style="left:1088.80px;top:563.19px;color:#7c7c7c;letter-spacing:0.102px;">Filter Properties (Ctrl+Shift+P)</span>
<span id="t75" class="t" style="left:1109.00px;top:591.19px;color:#000;letter-spacing:0.419px;font-weight:bold;">Data</span>
<span id="t76" class="t" style="left:1109.00px;top:616.19px;color:#7c7c7c;letter-spacing:-0.120px;">ClassName</span>
<span id="t77" class="t" style="left:1190.00px;top:616.19px;color:#7c7c7c;letter-spacing:0.215px;">Script</span>
<span id="t78" class="t" style="left:1109.00px;top:641.19px;color:#7c7c7c;letter-spacing:0.432px;">CurrentEditor</span>
<span id="t79" class="t" style="left:1109.00px;top:666.19px;color:#000;letter-spacing:0.152px;">Name</span>
<span id="t80" class="t" style="left:1190.00px;top:666.19px;color:#000;letter-spacing:0.251px;">SpinScript</span>
<span id="t81" class="t" style="left:1109.00px;top:691.19px;color:#000;letter-spacing:0.376px;">Parent</span>
<span id="t82" class="t" style="left:1190.00px;top:691.19px;color:#000;letter-spacing:0.373px;">SpinningBlock</span>
<span id="t83" class="t" style="left:1109.00px;top:716.19px;color:#000;letter-spacing:-0.025px;font-weight:bold;">Behavior</span>
<span id="t84" class="t" style="left:1109.00px;top:741.19px;color:#000;letter-spacing:0.160px;">Archivable</span>
<span id="t85" class="t" style="left:1109.00px;top:766.19px;color:#000;letter-spacing:0.070px;">Disabled</span>
<span id="t86" class="t" style="left:11.90px;top:901.19px;color:#777;letter-spacing:0.140px;">Run a command</span>
</div>
</body></html>
